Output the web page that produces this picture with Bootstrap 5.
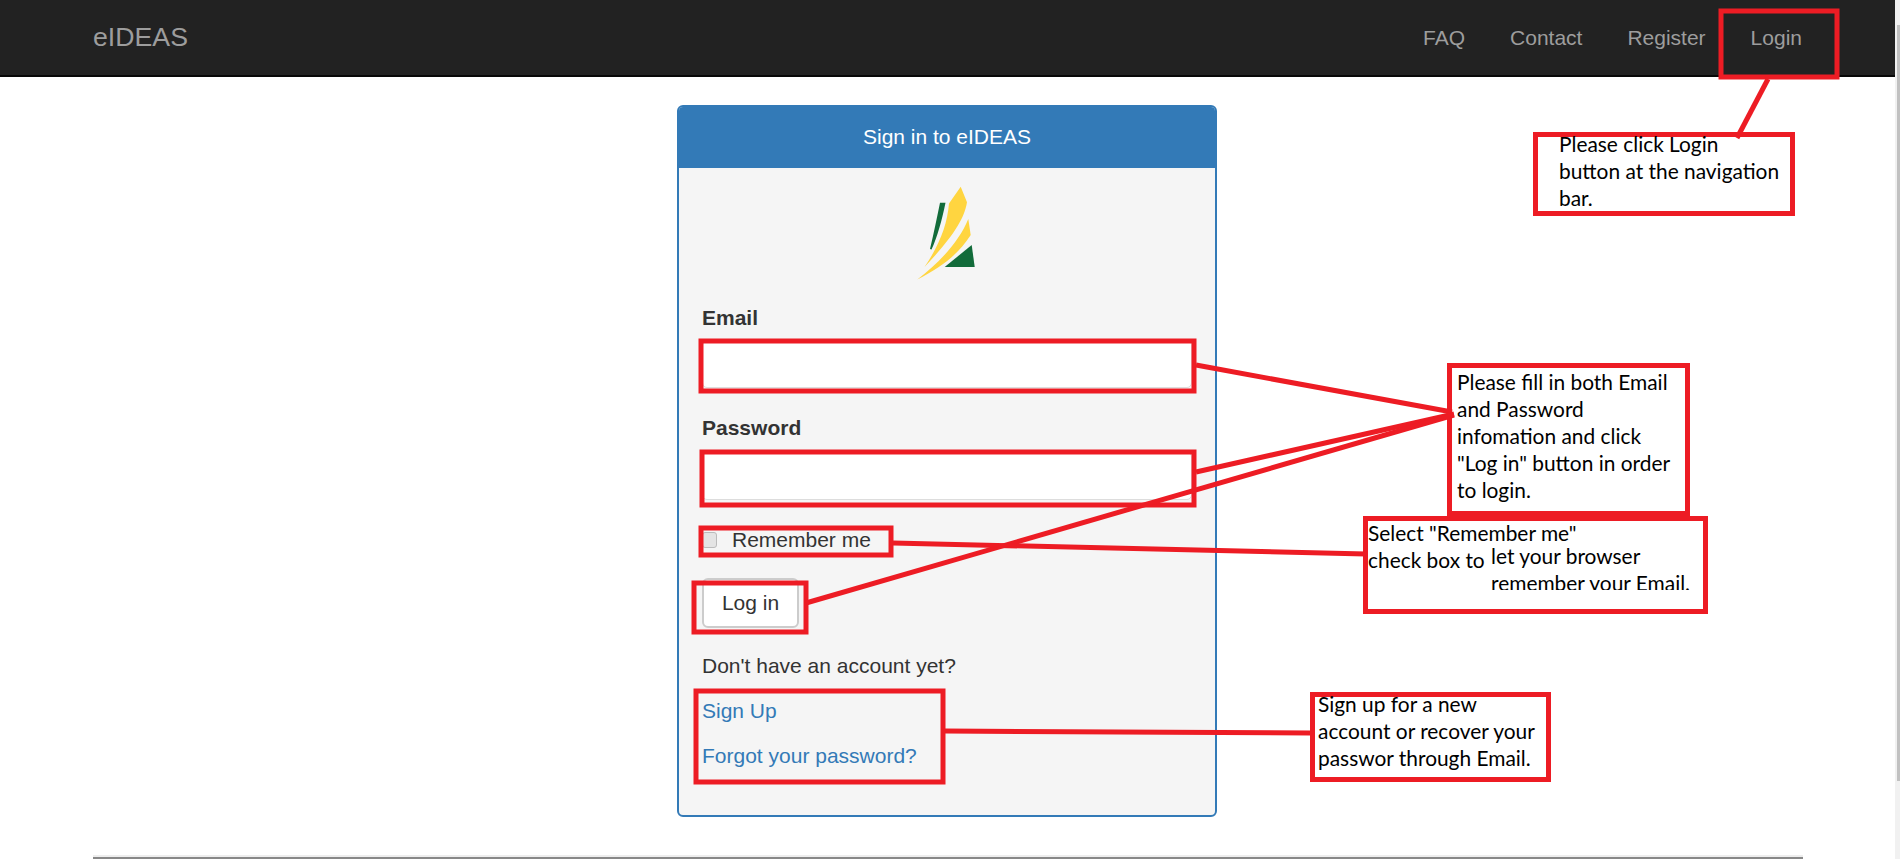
<!DOCTYPE html>
<html lang="en">
<head>
  <meta charset="UTF-8" />
  <meta name="viewport" content="width=device-width, initial-scale=1.0" />
  <title>eIDEAS - Sign in</title>
  <link href="https://cdn.jsdelivr.net/npm/bootstrap@5.3.0/dist/css/bootstrap.min.css" rel="stylesheet" />
  <style>
    html, body { height: 859px; overflow: hidden; }
    body { font-family: "Liberation Sans", Arial, sans-serif; font-size: 21px; color: #333; background: #fff; position: relative; }

    .top-bar { background: #222; border-bottom: 2px solid #080808; height: 77px; padding: 0; }
    .top-bar .container-fluid { padding: 0 98px 0 93px; }
    .top-bar .navbar-brand { color: #9d9d9d; font-size: 26.7px; padding: 0; margin: 0; }
    .top-bar .nav-link { color: #9d9d9d; font-size: 21px; padding: 0; }
    .top-bar .navbar-nav { gap: 45px; flex-direction: row; }

    .page-wrap { width: 1710px; margin-left: 93px; }
    .signin-panel { width: 540px; margin: 28px 0 0 584px; height: 712px; border: 2px solid #337ab7; border-radius: 6px; background: #f5f5f5; }
    .signin-panel .card-header { background: #337ab7; color: #fff; height: 61px; border: 0; border-radius: 4px 4px 0 0; font-size: 21px; display: flex; align-items: center; justify-content: center; padding: 0 0 2px; }
    .signin-panel .card-body { padding: 2px 23px 0; }
    .logo-mark { display: block; width: 120px; height: 120px; margin: 0 auto; }
    .field-label { font-weight: 700; margin: 13px 0 7px; line-height: 30px; display: block; }
    .signin-panel .form-control { height: 48px; border: 1px solid #ddd; border-radius: 5px; }
    .pw-label { margin: 25px 0 9px; }
    .signin-panel .form-check { margin: 28px 0 0; padding: 0; display: flex; align-items: center; height: 24px; min-height: 0; }
    .signin-panel .form-check-input { float: none; margin: 0 15px 0 0; width: 15px; height: 16px; background-color: #e4e4e4; border: 1px solid #bbb; border-radius: 3px; }
    .signin-panel .form-check-label { line-height: 24px; }
    .login-btn { display: block; margin-top: 26px; width: 97px; height: 50px; background: #fff; border: 2px solid #ccc; border-radius: 6px; color: #333; font-size: 21px; padding: 0; }
    .signin-panel p { margin: 0; line-height: 30px; }
    .no-account { padding-top: 23px; }
    .help-link { color: #337ab7; text-decoration: none; display: block; line-height: 30px; }
    .sign-link { margin-top: 15px; }
    .forgot-link { margin-top: 15px; }
    .foot-rule { margin: 38px 0 0; border: 0; border-top: 2px solid #eee; border-bottom: 2px solid #888; opacity: 1; }

    .fake-scroll { position: absolute; top: 0; right: 0; width: 5px; height: 859px; background: #f1f1f1; }
    .fake-scroll-thumb { position: absolute; top: 25px; left: 2px; right: 0; height: 756px; background: #c1c1c1; }

    .note-lines { position: absolute; top: 0; left: 0; pointer-events: none; }
    .note-box { position: absolute; background: #fff; border: 5px solid #ed1c24; font-family: Lato, "Open Sans", sans-serif; font-size: 20.9px; line-height: 27px; color: #000; white-space: nowrap; }
    .note-login { left: 1533px; top: 132px; width: 262px; height: 84px; padding: 0 0 0 21px; }
    .note-fill { left: 1447px; top: 363px; width: 243px; height: 153px; padding: 0 0 0 5px; }
    .note-remember { left: 1363px; top: 516px; width: 345px; height: 98px; }
    .note-remember span { position: absolute; display: block; }
    .note-signup { left: 1310px; top: 692px; width: 241px; height: 90px; padding: 0 0 0 3px; }
    .lift-text { margin-top: -7px; }
    .clip-head { left: 0; top: -2px; }
    .clip-tail { left: 123px; top: 21px; height: 48px; overflow: hidden; }
  </style>
</head>
<body>
  <nav class="navbar top-bar">
    <div class="container-fluid">
      <a class="navbar-brand" href="#">eIDEAS</a>
      <ul class="navbar-nav">
        <li class="nav-item"><a class="nav-link" href="#">FAQ</a></li>
        <li class="nav-item"><a class="nav-link" href="#">Contact</a></li>
        <li class="nav-item"><a class="nav-link" href="#">Register</a></li>
        <li class="nav-item"><a class="nav-link" href="#">Login</a></li>
      </ul>
    </div>
  </nav>

  <div class="page-wrap">
    <div class="card signin-panel">
      <div class="card-header">Sign in to eIDEAS</div>
      <div class="card-body">
        <svg class="logo-mark" viewBox="7 0 120 120">
          <path fill="#ffd540" d="M80.7 16.7L87 32.3C84 50 72 68 44.5 97 60 74 67 55 69 33.5Z" />
          <path fill="#ffd540" d="M88.3 49L90.7 65C78 85 60 98 37.3 109.5 58 94 79 72 88.3 49Z" />
          <path fill="#126b3a" d="M60 32.7H65.5C62 50 57 68 51.5 79.5L50 79C54 62 57 47 60 32.7Z" />
          <path fill="#126b3a" d="M91.7 75L94.7 97H64.7Z" />
        </svg>
        <form>
          <label class="field-label" for="email">Email</label>
          <input class="form-control" id="email" type="email" />
          <label class="field-label pw-label" for="password">Password</label>
          <input class="form-control" id="password" type="password" />
          <div class="form-check">
            <input class="form-check-input" id="remember" type="checkbox" />
            <label class="form-check-label" for="remember">Remember me</label>
          </div>
          <button class="btn login-btn" type="button">Log in</button>
        </form>
        <p class="no-account">Don't have an account yet?</p>
        <a class="help-link sign-link" href="#">Sign Up</a>
        <a class="help-link forgot-link" href="#">Forgot your password?</a>
      </div>
    </div>
    <hr class="foot-rule" />
  </div>

  <div class="note-box note-login"><div class="lift-text">Please click Login<br />button at the navigation<br />bar.</div></div>
  <div class="note-box note-fill">Please fill in both Email<br />and Password<br />infomation and click<br />"Log in" button in order<br />to login.</div>
  <div class="note-box note-remember">
    <span class="clip-head">Select "Remember me"<br />check box to</span>
    <span class="clip-tail">let your browser<br />remember your Email.</span>
  </div>
  <div class="note-box note-signup"><div class="lift-text">Sign up for a new<br />account or recover your<br />passwor through Email.</div></div>

  <svg class="note-lines" width="1900" height="859" fill="none" stroke="#ed1c24" stroke-width="5">
    <rect x="701" y="341" width="493" height="50" />
    <rect x="702" y="452" width="492" height="53" />
    <rect x="701" y="528" width="190" height="27" />
    <rect x="694" y="583" width="112" height="49" />
    <rect x="696" y="691" width="247" height="91" />
    <rect x="1721" y="11" width="116" height="66" />
    <path d="M1768 79L1737 138" />
    <path d="M1196 365L1452 412" />
    <path d="M1196 472L1454 414" />
    <path d="M806 603L1454 415" />
    <path d="M893 543L1366 554" />
    <path d="M945 731L1310 733" />
  </svg>

  <div class="fake-scroll"><div class="fake-scroll-thumb"></div></div>

  <script src="https://cdn.jsdelivr.net/npm/bootstrap@5.3.0/dist/js/bootstrap.bundle.min.js"></script>
</body>
</html>
